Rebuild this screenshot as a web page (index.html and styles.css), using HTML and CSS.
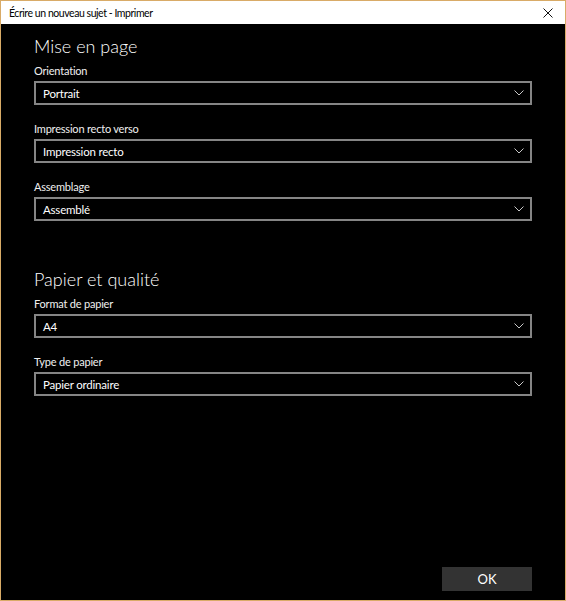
FILE: index.html
```html
<!DOCTYPE html>
<html lang="fr">
<head>
<meta charset="utf-8">
<title>Imprimer</title>
<link rel="stylesheet" href="styles.css">
</head>
<body>
<div class="window">
  <div class="titlebar">
    <span class="title">Écrire un nouveau sujet - Imprimer</span>
    <span class="close" aria-label="Fermer">
      <svg width="10" height="10" viewBox="0 0 10 10"><path d="M0.5 0.5 L9.5 9.5 M9.5 0.5 L0.5 9.5" stroke="#111" stroke-width="1" fill="none"/></svg>
    </span>
  </div>
  <div class="content">
    <h2 class="heading">Mise en page</h2>
    <div class="field">
      <div class="label">Orientation</div>
      <div class="select"><span>Portrait</span><svg class="chev" width="10" height="6" viewBox="0 0 10 6"><path d="M0.5 0.5 L5 5 L9.5 0.5" stroke="#c8c8c8" stroke-width="1" fill="none"/></svg></div>
    </div>
    <div class="field">
      <div class="label">Impression recto verso</div>
      <div class="select"><span>Impression recto</span><svg class="chev" width="10" height="6" viewBox="0 0 10 6"><path d="M0.5 0.5 L5 5 L9.5 0.5" stroke="#c8c8c8" stroke-width="1" fill="none"/></svg></div>
    </div>
    <div class="field">
      <div class="label">Assemblage</div>
      <div class="select"><span>Assemblé</span><svg class="chev" width="10" height="6" viewBox="0 0 10 6"><path d="M0.5 0.5 L5 5 L9.5 0.5" stroke="#c8c8c8" stroke-width="1" fill="none"/></svg></div>
    </div>
    <h2 class="heading second">Papier et qualité</h2>
    <div class="field">
      <div class="label">Format de papier</div>
      <div class="select"><span>A4</span><svg class="chev" width="10" height="6" viewBox="0 0 10 6"><path d="M0.5 0.5 L5 5 L9.5 0.5" stroke="#c8c8c8" stroke-width="1" fill="none"/></svg></div>
    </div>
    <div class="field">
      <div class="label">Type de papier</div>
      <div class="select"><span>Papier ordinaire</span><svg class="chev" width="10" height="6" viewBox="0 0 10 6"><path d="M0.5 0.5 L5 5 L9.5 0.5" stroke="#c8c8c8" stroke-width="1" fill="none"/></svg></div>
    </div>
    <div class="footer">
      <button class="ok">OK</button>
    </div>
  </div>
</div>
</body>
</html>
```

FILE: styles.css
```css
html, body {
  margin: 0;
  padding: 0;
  background: #000;
}
body {
  font-family: Lato, "Open Sans", sans-serif;
}
.window {
  width: 566px;
  height: 601px;
  box-sizing: border-box;
  border: 1px solid #d9ab67;
  background: #000;
  display: flex;
  flex-direction: column;
}
.titlebar {
  height: 23px;
  flex: none;
  background: #fff;
  display: flex;
  align-items: center;
  justify-content: space-between;
  padding: 0 12px 0 8px;
}
.title {
  font-size: 10.5px;
  color: #000;
  letter-spacing: -0.45px;
}
.close {
  display: flex;
  width: 10px;
  height: 10px;
}
.content {
  flex: 1;
  display: flex;
  flex-direction: column;
  padding: 8px 33px 9px 33px;
  color: #fff;
}
.heading {
  margin: 0;
  font-size: 18px;
  font-weight: 300;
  line-height: 28px;
  color: #fff;
}
.heading.second {
  margin-top: 44px;
}
.field {
  display: flex;
  flex-direction: column;
  margin-top: 3px;
}
.field + .field {
  margin-top: 16px;
}
.label {
  font-size: 11px;
  line-height: 16px;
  letter-spacing: -0.2px;
  color: #f0f0f0;
}
.select {
  margin-top: 2px;
  height: 24px;
  box-sizing: border-box;
  border: 2px solid #858585;
  display: flex;
  align-items: center;
  justify-content: space-between;
  padding: 0 6px 0 7px;
  font-size: 11.5px;
  letter-spacing: -0.2px;
  color: #fff;
}
.chev {
  display: block;
}
.footer {
  margin-top: auto;
  display: flex;
  justify-content: flex-end;
}
.ok {
  width: 90px;
  height: 24px;
  border: none;
  background: #333;
  color: #fff;
  font-family: inherit;
  font-size: 13px;
  padding: 0;
}
```
